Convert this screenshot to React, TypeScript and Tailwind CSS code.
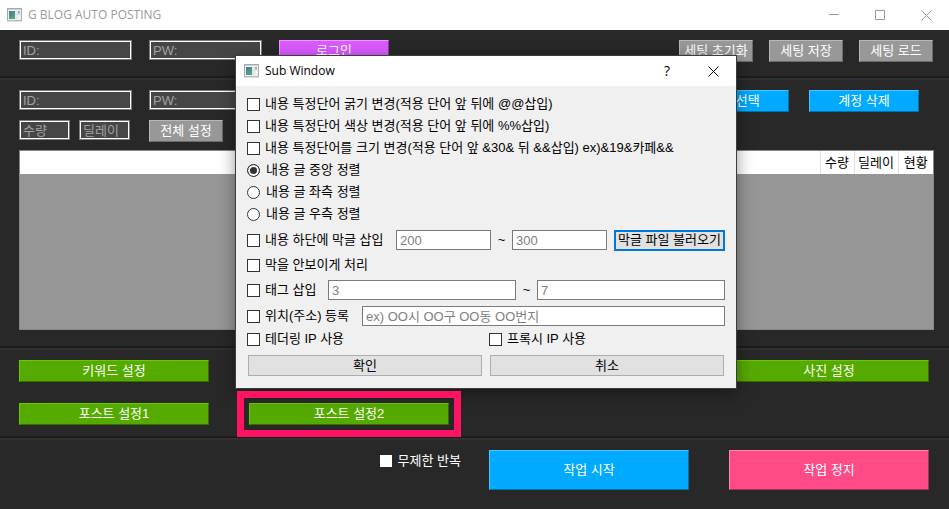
import { useState } from "react";
import clsx from "clsx";

const buttonTones = {
  gray: "bg-[#989898] border-t-[#b8b8b8] border-l-[#b8b8b8] border-r-[#6c6c6c] border-b-[#6c6c6c]",
  green: "bg-[#55aa00] border-t-[#66cc00] border-l-[#66cc00] border-r-[#376e00] border-b-[#376e00]",
  blue: "bg-[#00aaff] border-t-[#4cc4ff] border-l-[#4cc4ff] border-r-[#0073ad] border-b-[#0073ad]",
  pink: "bg-[#ff4a86] border-t-[#ff86ae] border-l-[#ff86ae] border-r-[#a83058] border-b-[#a83058]",
  purple: "bg-[#dc5aff] border-t-[#ea9aff] border-l-[#ea9aff] border-r-[#9038a8] border-b-[#9038a8]",
};

function PanelButton({ tone, className, children }: { tone: keyof typeof buttonTones; className: string; children: string }) {
  return (
    <button type="button" className={clsx("shrink-0 border text-white", buttonTones[tone], className)}>
      {children}
    </button>
  );
}

function DarkInput({ placeholder, className }: { placeholder: string; className: string }) {
  return (
    <input
      type="text"
      aria-label={placeholder}
      placeholder={placeholder}
      className={clsx(
        "h-5 shrink-0 border border-[#7c7c7c] bg-[#464646] px-[3px] text-white shadow-[inset_0_0_0_1px_#fff] outline-none placeholder:text-[#a2a2a2]",
        className
      )}
    />
  );
}

function LightInput({ label, placeholder }: { label: string; placeholder: string }) {
  return (
    <input
      type="text"
      aria-label={label}
      placeholder={placeholder}
      className="h-5 w-0 flex-1 border border-[#7a7a7a] bg-white px-[3px] outline-none placeholder:text-[#808080]"
    />
  );
}

function Check({ label, className }: { label: string; className?: string }) {
  return (
    <label className={clsx("flex shrink-0 items-center gap-[5px] whitespace-nowrap", className)}>
      <input
        type="checkbox"
        className="size-[13px] shrink-0 appearance-none border border-[#333] bg-white checked:bg-[#333]"
      />
      {label}
    </label>
  );
}

function AppIcon() {
  return (
    <svg width="15" height="14" viewBox="0 0 15 14" className="shrink-0" aria-hidden="true">
      <defs>
        <linearGradient id="screen" x1="0" y1="0" x2="0.6" y2="1">
          <stop offset="0" stopColor="#4878a8" />
          <stop offset="1" stopColor="#4ea870" />
        </linearGradient>
        <linearGradient id="side" x1="0" y1="0" x2="0" y2="1">
          <stop offset="0" stopColor="#6f9fc4" />
          <stop offset="1" stopColor="#e4ece8" />
        </linearGradient>
      </defs>
      <rect x="0.5" y="0.5" width="14" height="12" fill="#f2f2f2" stroke="#a4aab0" />
      <rect x="1" y="1" width="13" height="1" fill="#ccd2d8" />
      <rect x="2" y="3" width="6" height="8" fill="url(#screen)" />
      <rect x="8" y="3" width="3" height="8" fill="#e2e6ea" />
      <rect x="11" y="3" width="2" height="4" fill="url(#side)" />
      <rect x="0" y="12" width="15" height="1" fill="#b4b8bc" />
      <rect x="0" y="13" width="15" height="1" fill="#e0e0e0" />
    </svg>
  );
}

function CloseIcon() {
  return (
    <svg width="11" height="11" viewBox="0 0 11 11" stroke="currentColor" fill="none" aria-hidden="true">
      <path d="M0.5 0.5 10.5 10.5M10.5 0.5 0.5 10.5" />
    </svg>
  );
}

function Divider() {
  return <hr className="h-1 border-t-2 border-b-2 border-t-[#1c1c1c] border-b-[#303030]" />;
}

const wordOptions = [
  "내용 특정단어 굵기 변경(적용 단어 앞 뒤에 @@삽입)",
  "내용 특정단어 색상 변경(적용 단어 앞 뒤에 %%삽입)",
  "내용 특정단어를 크기 변경(적용 단어 앞 &30& 뒤 &&삽입) ex)&19&카페&&",
];

const alignOptions = [
  { id: "center", label: "내용 글 중앙 정렬" },
  { id: "left", label: "내용 글 좌측 정렬" },
  { id: "right", label: "내용 글 우측 정렬" },
];

function SubWindow() {
  const [align, setAlign] = useState("center");

  return (
    <div
      role="dialog"
      aria-label="Sub Window"
      className="absolute top-14 left-[236px] w-[500px] bg-[#f0f0f0] text-black shadow-[0_0_0_1px_#3c3c3c,0_4px_16px_rgba(0,0,0,0.45)]"
    >
      <header className="flex h-[30px] items-center bg-white pl-2">
        <AppIcon />
        <h2 className="ml-[6px] flex-1 font-['Open_Sans',sans-serif] text-[12px]">Sub Window</h2>
        <button type="button" aria-label="Help" className="h-full w-[46px] font-['Open_Sans',sans-serif] text-[14px] font-medium">
          ?
        </button>
        <button type="button" aria-label="Close" className="flex h-full w-[46px] items-center justify-center">
          <CloseIcon />
        </button>
      </header>

      <form className="px-[11px] pt-[7px] pb-3">
        {wordOptions.map((label) => (
          <Check key={label} label={label} className="h-[22px]" />
        ))}
        {alignOptions.map(({ id, label }) => (
          <label key={id} className="flex h-[22px] items-center gap-[6px]">
            <input
              type="radio"
              name="align"
              checked={align === id}
              onChange={() => setAlign(id)}
              className="size-[13px] shrink-0 appearance-none rounded-full border border-[#333] bg-white checked:bg-[#333] checked:shadow-[inset_0_0_0_2px_#fff]"
            />
            {label}
          </label>
        ))}

        <div className="flex h-[30px] items-center">
          <Check label="내용 하단에 막글 삽입" className="w-[149px]" />
          <LightInput label="막글 최소" placeholder="200" />
          <span className="w-[21px] text-center">~</span>
          <LightInput label="막글 최대" placeholder="300" />
          <button type="button" className="ml-[7px] h-[21px] w-[111px] shrink-0 border-2 border-[#0078d7] bg-[#e1e1e1] leading-4 whitespace-nowrap">
            막글 파일 불러오기
          </button>
        </div>
        <Check label="막을 안보이게 처리" className="h-5" />
        <div className="flex h-[30px] items-center">
          <Check label="태그 삽입" className="w-[81px]" />
          <LightInput label="태그 최소" placeholder="3" />
          <span className="w-[21px] text-center">~</span>
          <LightInput label="태그 최대" placeholder="7" />
        </div>
        <div className="flex h-[22px] items-center">
          <Check label="위치(주소) 등록" className="w-[115px]" />
          <LightInput label="위치(주소)" placeholder="ex) OO시 OO구 OO동 OO번지" />
        </div>
        <div className="flex h-6 items-center">
          <Check label="테더링 IP 사용" className="w-[242px]" />
          <Check label="프록시 IP 사용" />
        </div>
        <div className="mt-1 grid grid-cols-2 gap-2 px-px">
          <button type="button" className="h-[21px] border border-[#adadad] bg-[#e1e1e1]">확인</button>
          <button type="button" className="h-[21px] border border-[#adadad] bg-[#e1e1e1]">취소</button>
        </div>
      </form>
    </div>
  );
}

export default function App() {
  return (
    <div className="relative min-h-screen bg-[#282828] font-['Liberation_Sans','Noto_Sans_CJK_KR',sans-serif] text-[13px] leading-4 text-white">
      <header className="flex h-[30px] items-center bg-white pl-[7px] text-[#999]">
        <AppIcon />
        <h1 className="ml-[6px] flex-1 font-['Open_Sans',sans-serif] text-[12px]">G BLOG AUTO POSTING</h1>
        <button type="button" aria-label="Minimize" className="flex h-full w-[46px] items-center justify-center">
          <svg width="10" height="10" viewBox="0 0 10 10" stroke="currentColor" aria-hidden="true">
            <path d="M0 4.5H10" />
          </svg>
        </button>
        <button type="button" aria-label="Maximize" className="flex h-full w-[46px] items-center justify-center">
          <svg width="10" height="10" viewBox="0 0 10 10" stroke="currentColor" fill="none" aria-hidden="true">
            <path d="M0.5 0.5H9.5V9.5H0.5Z" />
          </svg>
        </button>
        <button type="button" aria-label="Close" className="flex h-full w-[46px] items-center justify-center">
          <CloseIcon />
        </button>
      </header>

      {/* Login */}
      <section className="flex items-start gap-[17px] pt-[10px] pr-4 pb-[14px] pl-[19px]">
        <DarkInput placeholder="ID:" className="w-[113px]" />
        <DarkInput placeholder="PW:" className="w-[113px]" />
        <PanelButton tone="purple" className="h-[22px] w-[110px]">로그인</PanelButton>
        <div className="ml-auto flex gap-4">
          <PanelButton tone="gray" className="h-[22px] w-[74px]">세팅 초기화</PanelButton>
          <PanelButton tone="gray" className="h-[22px] w-[74px]">세팅 저장</PanelButton>
          <PanelButton tone="gray" className="h-[22px] w-[74px]">세팅 로드</PanelButton>
        </div>
      </section>
      <Divider />

      {/* Accounts */}
      <section className="pt-[10px] pr-[15px] pb-4 pl-[19px]">
        <div className="flex items-start gap-[17px] pr-[15px]">
          <DarkInput placeholder="ID:" className="w-[113px]" />
          <DarkInput placeholder="PW:" className="w-[113px]" />
          <div className="ml-auto flex gap-5">
            <PanelButton tone="blue" className="h-[22px] w-[110px]">계정 선택</PanelButton>
            <PanelButton tone="blue" className="h-[22px] w-[110px]">계정 삭제</PanelButton>
          </div>
        </div>
        <div className="mt-2 flex items-start">
          <DarkInput placeholder="수량" className="w-[51px]" />
          <DarkInput placeholder="딜레이" className="ml-[9px] w-[51px]" />
          <PanelButton tone="gray" className="ml-[19px] h-[22px] w-[74px]">전체 설정</PanelButton>
        </div>
        <div className="mt-2 h-[180px] border border-[#828790] bg-[#969696]">
          <table className="w-full table-fixed border-collapse bg-white text-black">
            <thead>
              <tr className="h-[23px]">
                <th aria-label="계정" className="border-r border-[#e0e0e0]" />
                <th className="w-[34px] border-r border-[#e0e0e0] p-0 font-normal">수량</th>
                <th className="w-[44px] border-r border-[#e0e0e0] p-0 font-normal">딜레이</th>
                <th className="w-[35px] p-0 font-normal">현황</th>
              </tr>
            </thead>
          </table>
        </div>
      </section>
      <Divider />

      {/* Post settings */}
      <section className="pt-[10px] pr-5 pb-[11px] pl-[19px]">
        <div className="flex justify-between">
          <PanelButton tone="green" className="h-[22px] w-[190px]">키워드 설정</PanelButton>
          <PanelButton tone="green" className="h-[22px] w-[200px]">사진 설정</PanelButton>
        </div>
        <div className="mt-[21px] flex gap-10">
          <PanelButton tone="green" className="h-[22px] w-[190px]">포스트 설정1</PanelButton>
          <div className="relative flex">
            <PanelButton tone="green" className="h-[22px] w-[200px]">포스트 설정2</PanelButton>
            <div className="pointer-events-none absolute -inset-3 z-10 border-[7px] border-[#ff1464]" />
          </div>
        </div>
      </section>
      <Divider />

      {/* Run */}
      <section className="flex items-start justify-end pt-[10px] pr-5 pb-[19px]">
        <label className="mr-7 flex h-[22px] items-center gap-[6px]">
          <input type="checkbox" className="size-3 appearance-none bg-white checked:bg-[#00aaff]" />
          무제한 반복
        </label>
        <PanelButton tone="blue" className="h-10 w-[200px]">작업 시작</PanelButton>
        <PanelButton tone="pink" className="ml-10 h-10 w-[200px]">작업 정지</PanelButton>
      </section>

      <SubWindow />
    </div>
  );
}
